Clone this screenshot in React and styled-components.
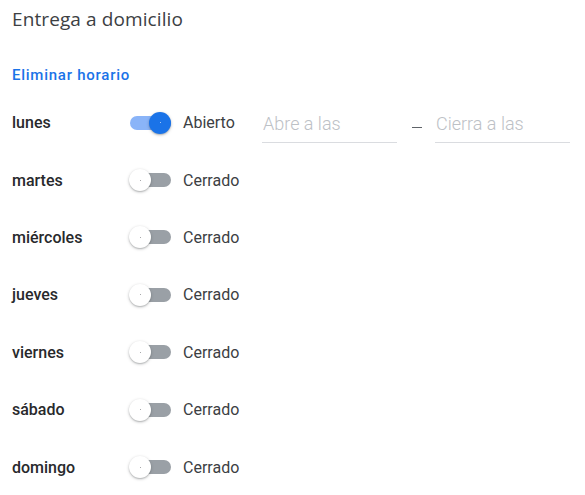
import React, { useState } from 'react';
import styled, { createGlobalStyle } from 'styled-components';

const GlobalStyle = createGlobalStyle`
  body {
    margin: 0;
    background: #fff;
    font-family: Roboto, "Liberation Sans", sans-serif;
    color: #202124;
  }
`;

const Panel = styled.div`
  padding: 5px 12px 0 12px;
  width: 585px;
  box-sizing: border-box;
`;

const Title = styled.h2`
  margin: 0;
  font-family: "Open Sans", Roboto, sans-serif;
  font-size: 19px;
  font-weight: 400;
  line-height: 28px;
  color: #3c4043;
  letter-spacing: 0.1px;
`;

const RemoveLink = styled.a`
  display: inline-block;
  margin-top: 32px;
  font-size: 15px;
  font-weight: 500;
  line-height: 20px;
  letter-spacing: 0.75px;
  color: #1a73e8;
  cursor: pointer;
`;

const Days = styled.div`
  display: flex;
  flex-direction: column;
  margin-top: 9px;
`;

const Row = styled.div`
  display: flex;
  align-items: center;
  height: 57.4px;
`;

const DayName = styled.div`
  width: 118px;
  font-size: 16px;
  font-weight: 500;
  color: #28292c;
`;

const Switch = styled.button`
  position: relative;
  width: 41px;
  height: 22px;
  padding: 0;
  border: 0;
  background: none;
  cursor: pointer;
  flex-shrink: 0;
`;

const Track = styled.span`
  position: absolute;
  left: 0;
  right: 0;
  top: 4px;
  height: 14px;
  border-radius: 7px;
  background: ${p => (p.$on ? '#8ab4f8' : '#9aa0a6')};
`;

const Thumb = styled.span`
  position: absolute;
  top: 0;
  left: ${p => (p.$on ? '19px' : '-1px')};
  width: 22px;
  height: 22px;
  border-radius: 50%;
  background: ${p => (p.$on ? '#1a73e8' : '#fff')};
  box-shadow: 0 1px 3px rgba(60, 64, 67, 0.35), 0 1px 1px rgba(60, 64, 67, 0.15);
  display: flex;
  align-items: center;
  justify-content: center;

  &::after {
    content: '';
    width: 1px;
    height: 1px;
    border-radius: 50%;
    background: ${p => (p.$on ? 'rgba(255,255,255,0.8)' : 'rgba(60,64,67,0.6)')};
  }
`;

const Status = styled.span`
  width: 79px;
  margin-left: 12px;
  font-size: 16px;
  color: #3c4043;
`;

const TimeField = styled.input`
  width: 135px;
  height: 30px;
  box-sizing: border-box;
  border: 0;
  border-bottom: 1px solid #dadce0;
  padding: 0 0 7px 1px;
  margin-top: 10px;
  font-family: Roboto, sans-serif;
  font-size: 18px;
  font-weight: 300;
  line-height: 22px;
  color: #202124;
  outline: none;
  background: transparent;

  &::placeholder {
    color: #bdc1c6;
  }
`;

const DashSlot = styled.span`
  width: 38px;
  display: flex;
  justify-content: center;
  margin-top: 10px;
`;

const Dash = styled.span`
  width: 10px;
  height: 1px;
  background: #5f6368;
  margin-left: 2px;
`;

const days = ['lunes', 'martes', 'miércoles', 'jueves', 'viernes', 'sábado', 'domingo'];

export default function App() {
  const [open, setOpen] = useState({ lunes: true });

  return (
    <Panel>
      <GlobalStyle />
      <Title>Entrega a domicilio</Title>
      <RemoveLink>Eliminar horario</RemoveLink>
      <Days>
        {days.map(day => {
          const on = !!open[day];
          return (
            <Row key={day}>
              <DayName>{day}</DayName>
              <Switch onClick={() => setOpen({ ...open, [day]: !on })}>
                <Track $on={on} />
                <Thumb $on={on} />
              </Switch>
              <Status>{on ? 'Abierto' : 'Cerrado'}</Status>
              {on && (
                <>
                  <TimeField placeholder="Abre a las" />
                  <DashSlot><Dash /></DashSlot>
                  <TimeField placeholder="Cierra a las" />
                </>
              )}
            </Row>
          );
        })}
      </Days>
    </Panel>
  );
}
